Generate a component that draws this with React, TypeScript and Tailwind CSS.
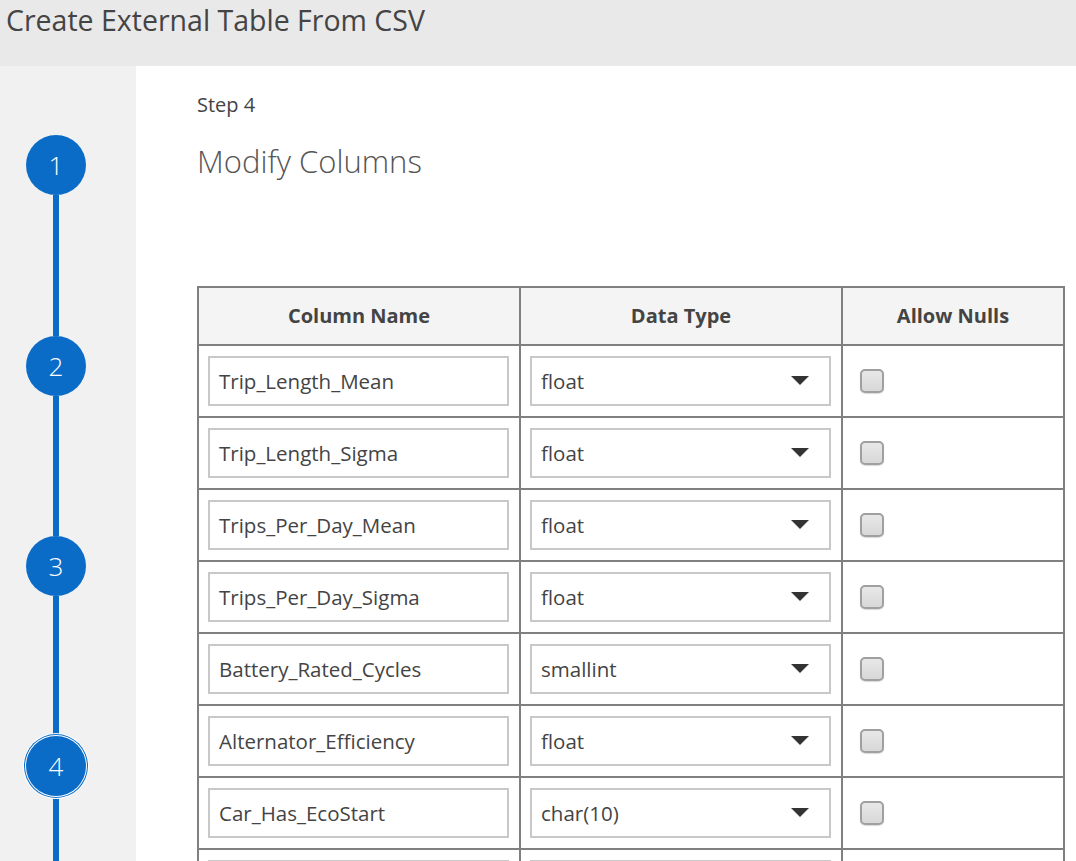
import React from "react";

const rows: [string, string][] = [
  ["Trip_Length_Mean", "float"],
  ["Trip_Length_Sigma", "float"],
  ["Trips_Per_Day_Mean", "float"],
  ["Trips_Per_Day_Sigma", "float"],
  ["Battery_Rated_Cycles", "smallint"],
  ["Alternator_Efficiency", "float"],
  ["Car_Has_EcoStart", "char(10)"],
  ["", ""],
];

function Circle({ n, active }: { n: number; active?: boolean }) {
  return (
    <div
      className={
        "w-[60px] h-[60px] shrink-0 rounded-full bg-[#0b6cc8] text-white flex items-center justify-center text-[26px] font-light " +
        (active ? "shadow-[0_0_0_1px_#ffffff,0_0_0_2px_#0b6cc8,0_0_0_3px_#ffffff]" : "")
      }
    >
      {n}
    </div>
  );
}

function Line({ h }: { h: string }) {
  return <div className={"w-[6px] bg-[#0b6cc8] shrink-0 " + h} />;
}

export default function App() {
  return (
    <div
      className="w-[1076px] h-[861px] overflow-hidden flex flex-col bg-white text-[#444]"
      style={{ fontFamily: '"Open Sans", "Noto Sans", sans-serif' }}
    >
      <div className="h-[66px] shrink-0 bg-[#e9e9e9] px-[6px]">
        <h1 className="text-[28.5px] leading-[40px] text-[#444]">Create External Table From CSV</h1>
      </div>
      <div className="flex flex-1 min-h-0">
        <div className="w-[136px] shrink-0 bg-[#f1f1f1] flex flex-col items-center pt-[69px] pr-[24px]">
          <Circle n={1} />
          <Line h="h-[141px]" />
          <Circle n={2} />
          <Line h="h-[140px]" />
          <Circle n={3} />
          <Line h="h-[140px]" />
          <Circle n={4} active />
          <div className="h-[3px] shrink-0" />
          <Line h="h-[80px]" />
        </div>
        <div className="flex-1 pl-[61px] pt-[26px]">
          <div className="text-[20px] leading-[26px] text-[#444]">Step 4</div>
          <div className="mt-[22px] text-[31px] leading-[42px] font-light text-[#555]">Modify Columns</div>
          <table className="mt-[104px] w-[866px] border-collapse border-2 border-[#808080] table-fixed">
            <colgroup>
              <col className="w-[322px]" />
              <col className="w-[322px]" />
              <col className="w-[222px]" />
            </colgroup>
            <thead>
              <tr className="bg-[#f4f4f4] h-[58px]">
                <th className="border-2 border-[#808080] text-[20px] font-bold text-[#444]">Column Name</th>
                <th className="border-2 border-[#808080] text-[20px] font-bold text-[#444]">Data Type</th>
                <th className="border-2 border-[#808080] text-[20px] font-bold text-[#444]">Allow Nulls</th>
              </tr>
            </thead>
            <tbody>
              {rows.map(([name, type], i) => (
                <tr key={i}>
                  <td className="border-2 border-[#808080] pl-[9px] pr-[10px] pt-[10px] pb-[10px] align-top">
                    <div className="h-[50px] border-2 border-[#c8c8c8] flex items-center px-[9px] text-[20.5px] text-[#444]">
                      {name}
                    </div>
                  </td>
                  <td className="border-2 border-[#808080] pl-[9px] pr-[10px] pt-[10px] pb-[10px] align-top">
                    <div className="h-[50px] border-2 border-[#c8c8c8] flex items-center justify-between pl-[9px] pr-[20px] text-[20.5px] text-[#444]">
                      <span>{type}</span>
                      <svg width="18" height="10" viewBox="0 0 18 10">
                        <path d="M0 0 L18 0 L9 9 Z" fill="#333" />
                      </svg>
                    </div>
                  </td>
                  <td className="border-2 border-[#808080] pl-[17px] pt-[10px] pb-[10px] align-middle">
                    <div className="w-[24px] h-[24px] rounded-[5px] border-2 border-[#a0a0a0] bg-[linear-gradient(#e8e8e8,#d8d8d8)] shadow-[0_1px_1px_rgba(0,0,0,0.15)]" />
                  </td>
                </tr>
              ))}
            </tbody>
          </table>
        </div>
      </div>
    </div>
  );
}
